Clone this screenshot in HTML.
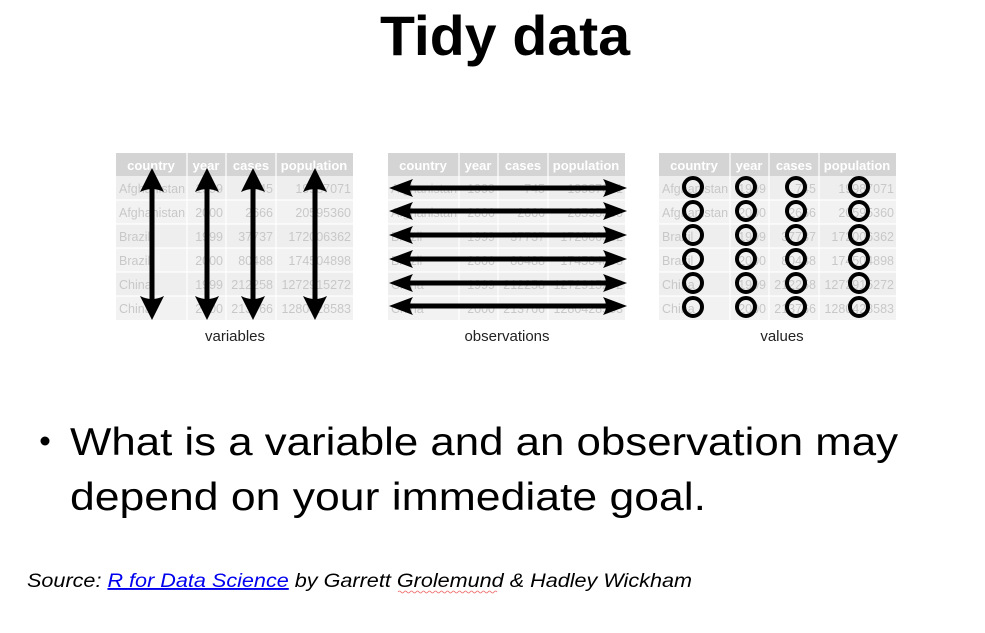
<!DOCTYPE html>
<html><head><meta charset="utf-8"><style>
html,body{margin:0;padding:0;background:#fff;width:985px;height:633px;overflow:hidden}
svg{display:block}
.h{font-family:"Liberation Sans",sans-serif;font-weight:bold;font-size:13px;fill:#fff}
.c{font-family:"Liberation Sans",sans-serif;font-size:12.5px;fill:#c8c8c8}
.cap{font-family:"Liberation Sans",sans-serif;font-size:15px;fill:#222}
</style></head><body>
<svg width="985" height="633" viewBox="0 0 985 633" xmlns="http://www.w3.org/2000/svg">
<defs>
<g id="tbl">
  <rect x="0" y="0" width="237" height="167" fill="#fff"/>
  <rect x="0" y="0" width="237" height="23" fill="#d4d4d4"/>
  <rect x="0" y="23" width="237" height="24" fill="#eeeeee"/>
  <rect x="0" y="47" width="237" height="24" fill="#f2f2f2"/>
  <rect x="0" y="71" width="237" height="24" fill="#eeeeee"/>
  <rect x="0" y="95" width="237" height="24" fill="#f2f2f2"/>
  <rect x="0" y="119" width="237" height="24" fill="#eeeeee"/>
  <rect x="0" y="143" width="237" height="24" fill="#f2f2f2"/>
  <g stroke="#fff" stroke-width="1.2">
    <line x1="71" y1="0" x2="71" y2="167"/><line x1="110" y1="0" x2="110" y2="167"/><line x1="160" y1="0" x2="160" y2="167"/>
    <line x1="0" y1="47" x2="237" y2="47"/><line x1="0" y1="71" x2="237" y2="71"/><line x1="0" y1="95" x2="237" y2="95"/><line x1="0" y1="119" x2="237" y2="119"/><line x1="0" y1="143" x2="237" y2="143"/>
  </g>
  <text class="h" x="35" y="17" text-anchor="middle">country</text>
  <text class="h" x="90" y="17" text-anchor="middle">year</text>
  <text class="h" x="135" y="17" text-anchor="middle">cases</text>
  <text class="h" x="198" y="17" text-anchor="middle">population</text>
  <g class="c">
    <text x="3" y="40">Afghanistan</text><text x="3" y="64">Afghanistan</text><text x="3" y="88">Brazil</text><text x="3" y="112">Brazil</text><text x="3" y="136">China</text><text x="3" y="160">China</text>
  </g>
  <g class="c" text-anchor="end">
    <text x="107" y="40">1999</text><text x="107" y="64">2000</text><text x="107" y="88">1999</text><text x="107" y="112">2000</text><text x="107" y="136">1999</text><text x="107" y="160">2000</text>
    <text x="157" y="40">745</text><text x="157" y="64">2666</text><text x="157" y="88">37737</text><text x="157" y="112">80488</text><text x="157" y="136">212258</text><text x="157" y="160">213766</text>
    <text x="235" y="40">19987071</text><text x="235" y="64">20595360</text><text x="235" y="88">172006362</text><text x="235" y="112">174504898</text><text x="235" y="136">1272915272</text><text x="235" y="160">1280428583</text>
  </g>
</g>
<g id="va">
  <rect x="-2.5" y="186" width="5" height="114" fill="#000"/>
  <path d="M0 168 L12 192 Q0 186 -12 192 Z" fill="#000"/>
  <path d="M0 320 L12 296 Q0 302 -12 296 Z" fill="#000"/>
</g>
<g id="ha">
  <rect x="406" y="-2.5" width="204" height="5" fill="#000"/>
  <path d="M389 0 L413 -9 Q407 0 413 9 Z" fill="#000"/>
  <path d="M627 0 L603 -9 Q609 0 603 9 Z" fill="#000"/>
</g>
<g id="col">
  <circle cx="0" cy="187" r="9" fill="none" stroke="#000" stroke-width="4"/>
  <circle cx="0" cy="211" r="9" fill="none" stroke="#000" stroke-width="4"/>
  <circle cx="0" cy="235" r="9" fill="none" stroke="#000" stroke-width="4"/>
  <circle cx="0" cy="259" r="9" fill="none" stroke="#000" stroke-width="4"/>
  <circle cx="0" cy="283" r="9" fill="none" stroke="#000" stroke-width="4"/>
  <circle cx="0" cy="307" r="9" fill="none" stroke="#000" stroke-width="4"/>
</g>
</defs>

<text x="505" y="55" text-anchor="middle" font-family="Liberation Sans, sans-serif" font-weight="bold" font-size="56" textLength="250" lengthAdjust="spacingAndGlyphs">Tidy data</text>

<use href="#tbl" transform="translate(116,153)"/>
<use href="#tbl" transform="translate(388,153)"/>
<use href="#tbl" transform="translate(659,153)"/>

<use href="#va" transform="translate(152,0)"/>
<use href="#va" transform="translate(207,0)"/>
<use href="#va" transform="translate(253,0)"/>
<use href="#va" transform="translate(315,0)"/>

<use href="#ha" transform="translate(0,188)"/>
<use href="#ha" transform="translate(0,211)"/>
<use href="#ha" transform="translate(0,235)"/>
<use href="#ha" transform="translate(0,259)"/>
<use href="#ha" transform="translate(0,283)"/>
<use href="#ha" transform="translate(0,306)"/>

<use href="#col" transform="translate(693,0)"/>
<use href="#col" transform="translate(746,0)"/>
<use href="#col" transform="translate(796,0)"/>
<use href="#col" transform="translate(859,0)"/>

<text class="cap" x="235" y="341" text-anchor="middle">variables</text>
<text class="cap" x="507" y="341" text-anchor="middle">observations</text>
<text class="cap" x="782" y="341" text-anchor="middle">values</text>

<circle cx="45" cy="441" r="4.5" fill="#000"/>
<text x="70" y="455" font-family="Liberation Sans, sans-serif" font-size="39" textLength="828" lengthAdjust="spacingAndGlyphs">What is a variable and an observation may</text>
<text x="70" y="510" font-family="Liberation Sans, sans-serif" font-size="39" textLength="636" lengthAdjust="spacingAndGlyphs">depend on your immediate goal.</text>

<text x="27" y="587" font-family="Liberation Sans, sans-serif" font-style="italic" font-size="19" textLength="665" lengthAdjust="spacingAndGlyphs">Source: <tspan fill="#0000ee" text-decoration="underline">R for Data Science</tspan> by Garrett Grolemund &amp; Hadley Wickham</text>
<path d="M398 592 q1.5 -2 3 0 t3 0 t3 0 t3 0 t3 0 t3 0 t3 0 t3 0 t3 0 t3 0 t3 0 t3 0 t3 0 t3 0 t3 0 t3 0 t3 0 t3 0 t3 0 t3 0 t3 0 t3 0 t3 0 t3 0 t3 0 t3 0 t3 0 t3 0 t3 0 t3 0 t3 0 t3 0 t3 0" fill="none" stroke="#e66" stroke-width="0.8"/>
</svg>
</body></html>
